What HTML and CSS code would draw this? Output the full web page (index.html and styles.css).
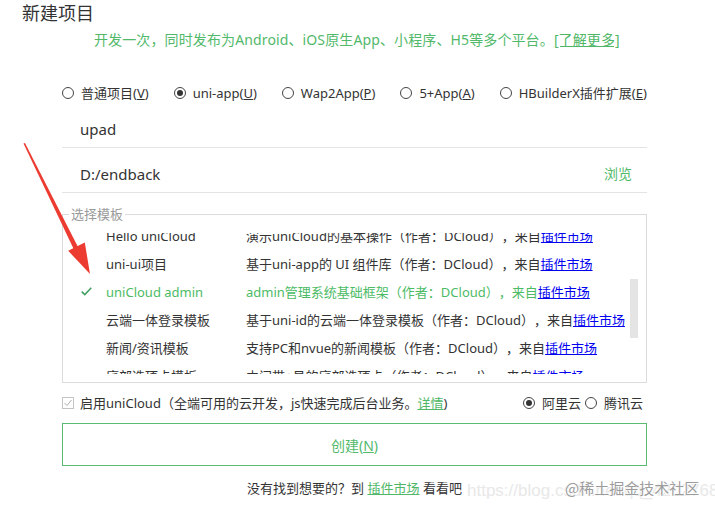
FILE: index.html
```html
<!DOCTYPE html>
<html lang="zh">
<head>
<meta charset="utf-8">
<title>新建项目</title>
<link rel="stylesheet" href="styles.css">
</head>
<body>
<div class="page">
  <h1 class="title">新建项目</h1>
  <p class="subtitle">开发一次，同时发布为Android、iOS原生App、小程序、H5等多个平台。<a class="glink">[了解更多]</a></p>
  <div class="content">
    <div class="types">
      <label class="radio-item"><span class="radio"></span><span>普通项目(<u>V</u>)</span></label>
      <label class="radio-item"><span class="radio on"></span><span>uni-app(<u>U</u>)</span></label>
      <label class="radio-item"><span class="radio"></span><span>Wap2App(<u>P</u>)</span></label>
      <label class="radio-item"><span class="radio"></span><span>5+App(<u>A</u>)</span></label>
      <label class="radio-item"><span class="radio"></span><span>HBuilderX插件扩展(<u>E</u>)</span></label>
    </div>
    <div class="field"><span class="value">upad</span></div>
    <div class="field"><span class="value">D:/endback</span><span class="browse">浏览</span></div>
    <fieldset class="templates">
      <legend>选择模板</legend>
      <div class="viewport">
        <ul class="list">
          <li class="row"><span class="check"></span><span class="name">Hello uniCloud</span><span class="desc">演示uniCloud的基本操作（作者：DCloud），来自<a class="blink">插件市场</a></span></li>
          <li class="row"><span class="check"></span><span class="name">uni-ui项目</span><span class="desc">基于uni-app的 UI 组件库（作者：DCloud），来自<a class="blink">插件市场</a></span></li>
          <li class="row selected"><span class="check"><svg class="tick" width="11" height="9" viewBox="0 0 11 9"><polyline points="0.7,4.6 3.8,7.6 10.3,0.8" fill="none" stroke="#3f9f60" stroke-width="1.5"/></svg></span><span class="name">uniCloud admin</span><span class="desc">admin管理系统基础框架（作者：DCloud），来自<a class="blink">插件市场</a></span></li>
          <li class="row"><span class="check"></span><span class="name">云端一体登录模板</span><span class="desc">基于uni-id的云端一体登录模板（作者：DCloud），来自<a class="blink">插件市场</a></span></li>
          <li class="row"><span class="check"></span><span class="name">新闻/资讯模板</span><span class="desc">支持PC和nvue的新闻模板（作者：DCloud），来自<a class="blink">插件市场</a></span></li>
          <li class="row"><span class="check"></span><span class="name">底部选项卡模板</span><span class="desc">中间带+号的底部选项卡（作者：DCloud），来自<a class="blink">插件市场</a></span></li>
        </ul>
      </div>
      <div class="scrollbar"></div>
    </fieldset>
    <div class="cloud-row">
      <span class="checkbox"><svg width="12" height="12" viewBox="0 0 12 12"><rect x="0.5" y="0.5" width="11" height="11" fill="#fff" stroke="#c4c4c4"/><polyline points="2.5,6 5,8.5 9.5,3" fill="none" stroke="#b0b0b0" stroke-width="1"/></svg></span>
      <span class="cloud-text">启用uniCloud（全端可用的云开发，js快速完成后台业务。<a class="glink">详情</a>)</span>
      <span class="providers">
        <span class="radio on"></span><span class="prov">阿里云</span>
        <span class="radio"></span><span class="prov">腾讯云</span>
      </span>
    </div>
    <button class="create">创建(<u>N</u>)</button>
    <p class="footer">没有找到想要的？到 <a class="glink">插件市场</a> 看看吧</p>
  </div>
  <svg class="arrow" width="715" height="512" viewBox="0 0 715 512">
    <polygon points="23.5,143.5 25,143 78,247 73.8,249.3" fill="#ec3b30"/>
    <polygon points="90,274 68.2,250.8 84.8,242.6" fill="#ec3b30"/>
  </svg>
  <div class="watermark">
    <span class="wm-url">https://blog.csdn.net/qq_42027681</span>
    <span class="wm-brand">@稀土掘金技术社区</span>
  </div>
</div>
</body>
</html>
```

FILE: styles.css
```css
* { box-sizing: border-box; }
html, body { margin: 0; padding: 0; background: #fff; }
body {
  font-family: "Noto Sans", "Noto Sans CJK SC", sans-serif;
  color: #333;
  font-size: 13px;
  text-spacing-trim: space-all;
}
.page {
  position: relative;
  width: 715px;
  height: 512px;
  overflow: hidden;
}
.title {
  margin: 0;
  padding-left: 22px;
  font-size: 18px;
  line-height: 26px;
  font-weight: normal;
  color: #333;
}
.subtitle {
  margin: 4px 0 0 94px;
  font-size: 14px;
  line-height: 20px;
  color: #52b96b;
  white-space: nowrap;
  letter-spacing: 0.12px;
}
.glink {
  color: #4fb767;
  text-decoration: underline;
}
.content {
  margin-left: 62px;
  width: 585px;
}
.types {
  margin-top: 33px;
  display: flex;
  align-items: center;
  gap: 25px;
  line-height: 20px;
  font-size: 13px;
}
.radio-item {
  display: flex;
  align-items: center;
  gap: 7px;
  white-space: nowrap;
}
.radio {
  display: inline-block;
  width: 12px;
  height: 12px;
  border: 1px solid #444;
  border-radius: 50%;
  position: relative;
  flex: none;
  background: #fff;
}
.radio.on::after {
  content: "";
  position: absolute;
  left: 2px;
  top: 2px;
  width: 6px;
  height: 6px;
  border-radius: 50%;
  background: #333;
}
.field {
  display: flex;
  align-items: center;
  height: 45px;
  padding: 12px 15px 4px 18px;
  line-height: 28px;
  border-bottom: 1px solid #e4e4e4;
  font-size: 15px;
  color: #333;
}
.browse {
  margin-left: auto;
  font-size: 14px;
  color: #52b96b;
}
.templates {
  position: relative;
  margin: 13px 0 0 0;
  padding: 11px 0 8px 0;
  border: 1px solid #dcdcdc;
  min-width: 0;
}
.templates legend {
  margin-left: 6px;
  padding: 0 2px;
  font-size: 13px;
  line-height: 16px;
  color: #9a9a9a;
}
.viewport {
  height: 141px;
  overflow: hidden;
}
.list {
  list-style: none;
  margin: -11px 0 0 0;
  padding: 0;
}
.row {
  display: flex;
  height: 28px;
  line-height: 28px;
  font-size: 13px;
  white-space: nowrap;
  color: #333;
}
.row.selected { color: #4cbb66; }
.check {
  width: 43px;
  flex: none;
  display: flex;
  align-items: center;
  padding-left: 18px;
}
.tick { margin-top: -2px; }
.name {
  width: 140px;
  flex: none;
}
.blink {
  color: #0000ee;
  text-decoration: underline;
}
.scrollbar {
  position: absolute;
  left: 567px;
  top: 57px;
  width: 8px;
  height: 59px;
  background: #e4e4e4;
}
.cloud-row {
  margin-top: 10px;
  display: flex;
  align-items: center;
  line-height: 20px;
  font-size: 13px;
  padding-right: 4px;
  white-space: nowrap;
}
.checkbox {
  display: flex;
  width: 12px;
  height: 12px;
  margin-right: 6px;
}
.providers {
  margin-left: auto;
  display: flex;
  align-items: center;
}
.prov { margin-left: 7px; margin-right: 4px; }
.prov:last-child { margin-right: 0; }
.create {
  display: block;
  margin-top: 10px;
  width: 100%;
  height: 43px;
  border: 1px solid #5cbb72;
  background: #fff;
  color: #52b96b;
  font-family: inherit;
  font-size: 14px;
  padding: 0;
}
.footer {
  margin: 12px 0 0 0;
  line-height: 20px;
  text-align: center;
  font-size: 13px;
  color: #333;
}
.arrow {
  position: absolute;
  left: 0;
  top: 0;
  pointer-events: none;
}
.watermark {
  position: absolute;
  left: 467px;
  top: 476px;
  width: 248px;
  height: 28px;
  pointer-events: none;
}
.wm-url {
  position: absolute;
  left: 0;
  top: 5px;
  font-family: "Liberation Sans", Arial, sans-serif;
  font-size: 17px;
  color: #e8e8e8;
  white-space: nowrap;
}
.wm-brand {
  position: absolute;
  left: 98px;
  top: 1px;
  font-family: "Noto Sans CJK SC", sans-serif;
  font-size: 15px;
  color: #9c9c9c;
  white-space: nowrap;
  text-shadow: 0 0 2px #fff, 0 0 2px #fff;
}
```
